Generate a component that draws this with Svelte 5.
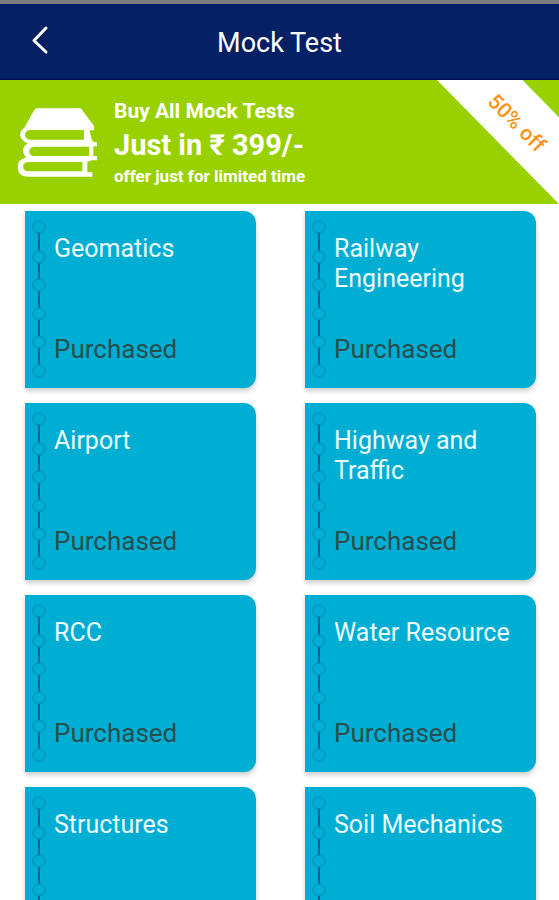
<script>
	const RING_POSITIONS = [16, 46, 74, 103, 131, 160];
	const RING_RADIUS = 6;

	const tests = [
		{ title: 'Geomatics', status: 'Purchased' },
		{ title: 'Railway Engineering', status: 'Purchased' },
		{ title: 'Airport', status: 'Purchased' },
		{ title: 'Highway and Traffic', status: 'Purchased' },
		{ title: 'RCC', status: 'Purchased' },
		{ title: 'Water Resource', status: 'Purchased' },
		{ title: 'Structures', status: 'Purchased' },
		{ title: 'Soil Mechanics', status: 'Purchased' }
	];
</script>

<div class="screen">
	<header class="app-bar">
		<button class="back" type="button" aria-label="Back">
			<svg width="18" height="30" viewBox="0 0 18 30" aria-hidden="true">
				<path d="M15 3 3 15.500 15 27" />
			</svg>
		</button>
		<h1>Mock Test</h1>
	</header>

	<section class="offer">
		<svg class="books" width="79" height="69" viewBox="24 23 237 207" aria-hidden="true">
			<path
				class="cover"
				d="M80 24H209Q214 24 217 30L252 77V90H238L246 120L252 126H261V138H250V167H261V180H245L232 184V216H247V229H55C14 229 14 182 42 174L49 171C34 158 36 134 54 130L44 124C27 114 25 94 43 82L71 32Q75 24 80 24Z"
			/>
			<path
				class="spine"
				d="M60 89H222V118H60C40 118 40 89 60 89ZM73 139H237V167H73C53 167 53 139 73 139ZM55 185H217V213H55C34 213 34 185 55 185Z"
			/>
		</svg>
		<div class="offer-text">
			<p class="offer-title">Buy All Mock Tests</p>
			<p class="offer-price">Just in ₹ 399/-</p>
			<p class="offer-note">offer just for limited time</p>
		</div>
		<div class="ribbon"><span>50% off</span></div>
	</section>

	<main class="tests">
		{#each tests as test (test.title)}
			<article class="card">
				<svg class="binding" width="14" height="177" viewBox="0 0 14 177" aria-hidden="true">
					{#each RING_POSITIONS as y, i}
						{#if i > 0}
							<line
								x1="7"
								x2="7"
								y1={RING_POSITIONS[i - 1] + RING_RADIUS}
								y2={y - RING_RADIUS}
							/>
						{/if}
						<circle cx="7" cy={y} r={RING_RADIUS} />
					{/each}
				</svg>
				<div class="card-body">
					<h2>{test.title}</h2>
					<p>{test.status}</p>
				</div>
			</article>
		{/each}
	</main>
</div>

<style>
	:global(body) {
		margin: 0;
		background: #fff;
		font-family: Roboto, sans-serif;
	}

	.screen {
		display: flex;
		flex-direction: column;
		height: 100vh;
		overflow: hidden;
	}

	h1,
	h2,
	p {
		margin: 0;
		font-weight: 400;
	}

	.app-bar {
		display: grid;
		grid-template-columns: 64px 1fr 64px;
		align-items: center;
		flex: none;
		height: 75px;
		border-top: 4px solid #7c7c7c;
		border-bottom: 1px solid #02105a;
		background: #052064;
		color: #fff;
	}

	.app-bar h1 {
		padding-top: 2px;
		font-size: 27px;
		line-height: 32px;
		text-align: center;
	}

	.back {
		display: flex;
		padding: 0 0 4px 31px;
		border: 0;
		background: none;
		cursor: pointer;
	}

	.back path {
		fill: none;
		stroke: #fff;
		stroke-width: 3;
		stroke-linecap: round;
		stroke-linejoin: round;
	}

	.offer {
		position: relative;
		display: flex;
		align-items: center;
		gap: 17px;
		flex: none;
		height: 124px;
		padding-left: 18px;
		overflow: hidden;
		background: #99d000;
		color: #fff;
	}

	.books {
		flex: none;
	}

	.cover {
		fill: #fff;
	}

	.spine {
		fill: #99d000;
	}

	.offer-text p {
		font-weight: 700;
		white-space: nowrap;
	}

	.offer-text .offer-title {
		font-size: 21px;
		line-height: 32px;
	}

	.offer-text .offer-price {
		font-size: 29px;
		line-height: 36px;
	}

	.offer-text .offer-note {
		font-size: 17px;
		line-height: 26px;
	}

	.ribbon {
		position: absolute;
		top: 0;
		right: 0;
		display: flex;
		align-items: center;
		justify-content: center;
		width: 122px;
		height: 124px;
		box-sizing: border-box;
		padding: 0 0 38px 38px;
		background: #fff;
		clip-path: polygon(0 0, 70% 0, 100% 30%, 100% 100%);
		color: #ff9211;
		font-size: 21px;
		font-weight: 500;
		white-space: nowrap;
	}

	.ribbon span {
		transform: rotate(45deg);
	}

	.tests {
		display: grid;
		grid-template-columns: 1fr 1fr;
		grid-auto-rows: 177px;
		gap: 15px 49px;
		flex: 1;
		min-height: 0;
		padding: 7px 23px 15px 25px;
		overflow-y: auto;
		scrollbar-width: none;
	}

	.card {
		display: flex;
		gap: 8px;
		padding-left: 7px;
		border-radius: 0 12px 12px 0;
		background: #00aed4;
		box-shadow: 0 3px 5px rgb(0 0 0 / 20%);
	}

	.binding {
		flex: none;
		fill: none;
		stroke: #0086b5;
	}

	.binding line {
		stroke: #00669a;
		stroke-width: 2;
	}

	.card-body {
		display: flex;
		flex: 1;
		flex-direction: column;
		justify-content: space-between;
		min-width: 0;
		padding: 23px 16px 24px 0;
	}

	.card-body h2 {
		color: #ecfcff;
		font-size: 25px;
		line-height: 30px;
	}

	.card-body p {
		color: #274e4e;
		font-size: 26px;
		line-height: 30px;
	}
</style>
